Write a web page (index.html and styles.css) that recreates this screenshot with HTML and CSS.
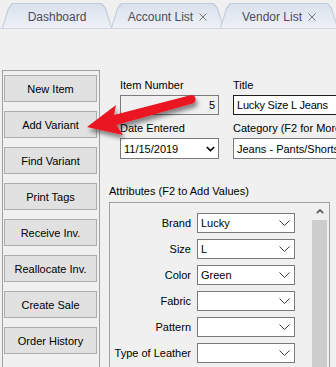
FILE: index.html
```html
<!DOCTYPE html>
<html lang="en">
<head>
    <meta charset="UTF-8">
    <meta name="viewport" content="width=device-width, initial-scale=1.0">
    <title>Item Editor</title>
    <link rel="stylesheet" href="styles.css">
</head>
<body>

<div class="tabbar">
    <div class="tab tab-first"><div class="tab-face">Dashboard</div></div>
    <div class="tab tab-mid">
        <div class="tab-face">Account List
            <svg class="tab-close" width="8" height="8" viewBox="0 0 8 8"><path d="M0.5 0.5 L7.5 7.5 M7.5 0.5 L0.5 7.5"/></svg>
        </div>
    </div>
    <div class="tab tab-last">
        <div class="tab-face">Vendor List
            <svg class="tab-close" width="8" height="8" viewBox="0 0 8 8"><path d="M0.5 0.5 L7.5 7.5 M7.5 0.5 L0.5 7.5"/></svg>
        </div>
    </div>
</div>

<div class="window">
    <div class="sidebar">
        <button class="side-btn">New Item</button>
        <button class="side-btn">Add Variant</button>
        <button class="side-btn">Find Variant</button>
        <button class="side-btn">Print Tags</button>
        <button class="side-btn">Receive Inv.</button>
        <button class="side-btn">Reallocate Inv.</button>
        <button class="side-btn">Create Sale</button>
        <button class="side-btn">Order History</button>
    </div>

    <div class="form">
        <div class="field-grid">
            <div class="field">
                <div class="field-label">Item Number</div>
                <div class="box box-readonly box-num">5</div>
            </div>
            <div class="field">
                <div class="field-label">Title</div>
                <div class="box box-focus">Lucky Size L Jeans</div>
            </div>
            <div class="field">
                <div class="field-label">Date Entered</div>
                <div class="box box-tall combo">
                    <span>11/15/2019</span>
                    <svg class="date-chevron" width="9" height="6" viewBox="0 0 9 6"><path d="M0.8 1 L4.5 4.6 L8.2 1"/></svg>
                </div>
            </div>
            <div class="field">
                <div class="field-label">Category (F2 for More)</div>
                <div class="box box-tall">Jeans - Pants/Shorts</div>
            </div>
        </div>

        <div class="attr-title">Attributes (F2 to Add Values)</div>
        <div class="attr-box">
            <div class="attr-rows">
                <div class="attr-row">
                    <span class="attr-label">Brand</span>
                    <div class="box attr-select"><span>Lucky</span><svg class="chevron" width="11" height="6" viewBox="0 0 11 6"><path d="M0.5 0.5 L5.5 5.5 L10.5 0.5"/></svg></div>
                </div>
                <div class="attr-row">
                    <span class="attr-label">Size</span>
                    <div class="box attr-select"><span>L</span><svg class="chevron" width="11" height="6" viewBox="0 0 11 6"><path d="M0.5 0.5 L5.5 5.5 L10.5 0.5"/></svg></div>
                </div>
                <div class="attr-row">
                    <span class="attr-label">Color</span>
                    <div class="box attr-select"><span>Green</span><svg class="chevron" width="11" height="6" viewBox="0 0 11 6"><path d="M0.5 0.5 L5.5 5.5 L10.5 0.5"/></svg></div>
                </div>
                <div class="attr-row">
                    <span class="attr-label">Fabric</span>
                    <div class="box attr-select"><span></span><svg class="chevron" width="11" height="6" viewBox="0 0 11 6"><path d="M0.5 0.5 L5.5 5.5 L10.5 0.5"/></svg></div>
                </div>
                <div class="attr-row">
                    <span class="attr-label">Pattern</span>
                    <div class="box attr-select"><span></span><svg class="chevron" width="11" height="6" viewBox="0 0 11 6"><path d="M0.5 0.5 L5.5 5.5 L10.5 0.5"/></svg></div>
                </div>
                <div class="attr-row">
                    <span class="attr-label">Type of Leather</span>
                    <div class="box attr-select"><span></span><svg class="chevron" width="11" height="6" viewBox="0 0 11 6"><path d="M0.5 0.5 L5.5 5.5 L10.5 0.5"/></svg></div>
                </div>
            </div>
            <div class="scrollbar">
                <div class="scroll-up">
                    <svg width="8" height="5" viewBox="0 0 8 5"><path d="M0.8 4.2 L4 1 L7.2 4.2"/></svg>
                </div>
                <div class="scroll-thumb"></div>
            </div>
        </div>
    </div>
</div>

<!-- red callout pointing at Add Variant -->
<svg class="callout" width="336" height="367" viewBox="0 0 336 367">
    <defs>
        <filter id="arrowShadow" x="-20%" y="-40%" width="140%" height="180%">
            <feDropShadow dx="2" dy="4" stdDeviation="2" flood-color="#000" flood-opacity="0.45"/>
        </filter>
    </defs>
    <path filter="url(#arrowShadow)" fill="#ea1520"
          d="M87 127 L116 105 L114 115 L190.3 95.2 A4.2 4.2 0 0 1 192.5 103.4 L116.5 125 L123 135 Z"/>
</svg>

</body>
</html>
```

FILE: styles.css
```css
body {
    margin: 0;
    width: 336px;
    height: 367px;
    overflow: hidden;
    position: relative;
    background-color: #f0f0f0;
    font-family: "Liberation Sans", Arial, sans-serif;
    font-size: 11px;
    color: #000;
}

/* tabs */
.tabbar {
    height: 28px;
    border-bottom: 1px solid #cfd6e1;
    display: flex;
    align-items: flex-end;
    padding-left: 2px;
    overflow: hidden;
}
.tab {
    height: 25px;
    flex: none;
    background-color: #c3ccd9;
    clip-path: polygon(0 100%, 6px 20%, 10px 0, calc(100% - 10px) 0, calc(100% - 6px) 20%, 100% 100%);
}
.tab-first { width: 110px; }
.tab-mid { width: 113px; margin-left: -1px; }
.tab-last { width: 118px; margin-left: -4px; }
.tab-face {
    height: 24px;
    margin: 1px 1px 0;
    display: flex;
    align-items: center;
    justify-content: center;
    gap: 6px;
    background: linear-gradient(#d9e1ec, #eef1f6);
    clip-path: polygon(0 100%, 6px 20%, 10px 0, calc(100% - 10px) 0, calc(100% - 6px) 20%, 100% 100%);
    font-size: 12px;
    color: #4f4a5c;
    padding-top: 1px;
    box-sizing: border-box;
}
.tab-close path {
    stroke: #777;
    stroke-width: 1;
    fill: none;
}

/* main area */
.window {
    display: flex;
    align-items: flex-start;
    height: 338px;
    overflow: hidden;
}
.sidebar {
    flex: none;
    width: 96px;
    height: 300px;
    margin: 41px 0 0 2px;
    padding-top: 4px;
    border-left: 1px solid #a0a0a0;
    border-top: 1px solid #a0a0a0;
    border-right: 1px solid #a0a0a0;
    display: flex;
    flex-direction: column;
    gap: 9px;
}
.side-btn {
    flex: none;
    width: 93px;
    height: 27px;
    margin-left: 1px;
    padding: 0;
    background-color: #e1e1e1;
    border: 1px solid #adadad;
    font-family: inherit;
    font-size: 11px;
    color: #000;
}

.form {
    flex: 1;
    height: 338px;
    padding-top: 50px;
    box-sizing: border-box;
    overflow: hidden;
}
.field-grid {
    display: grid;
    grid-template-columns: 99px 130px;
    column-gap: 14px;
    row-gap: 7px;
    padding-left: 20px;
}
.field-label {
    line-height: 13px;
    margin-bottom: 3px;
    white-space: nowrap;
}
.box {
    height: 20px;
    box-sizing: border-box;
    border: 1px solid #7a7a7a;
    background-color: #fff;
    padding: 0 3px 0 3px;
    display: flex;
    align-items: center;
    white-space: nowrap;
    overflow: hidden;
}
.box-tall { height: 21px; }
.box-readonly { background-color: #f0f0f0; }
.box-num { justify-content: flex-end; }
.box-focus { border-color: #1e1e1e; letter-spacing: -0.2px; }
.combo { justify-content: space-between; }
.date-chevron path {
    stroke: #000;
    stroke-width: 1.6;
    fill: none;
}

/* attributes */
.attr-title {
    margin: 26px 0 0 9px;
    line-height: 13px;
}
.attr-box {
    margin: 4px 0 0 9px;
    width: 221px;
    height: 180px;
    box-sizing: border-box;
    border: 1px solid #a0a0a0;
    display: flex;
}
.attr-rows {
    flex: 1;
    padding-top: 10px;
    display: flex;
    flex-direction: column;
    gap: 6px;
}
.attr-row {
    display: flex;
    align-items: center;
    height: 20px;
    flex: none;
}
.attr-label {
    width: 87px;
    padding-right: 6px;
    box-sizing: border-box;
    text-align: right;
    white-space: nowrap;
}
.attr-select {
    width: 98px;
    justify-content: space-between;
    padding-right: 4px;
}
.chevron path {
    stroke: #3c3c3c;
    stroke-width: 1;
    fill: none;
}
.scrollbar {
    width: 15px;
    margin-right: 2px;
    display: flex;
    flex-direction: column;
}
.scroll-up {
    height: 17px;
    display: flex;
    align-items: center;
    justify-content: center;
}
.scroll-up path {
    stroke: #606060;
    stroke-width: 1.8;
    fill: none;
}
.scroll-thumb {
    flex: 1;
    background-color: #cdcdcd;
}

.callout {
    position: absolute;
    left: 0;
    top: 0;
    pointer-events: none;
}
```
